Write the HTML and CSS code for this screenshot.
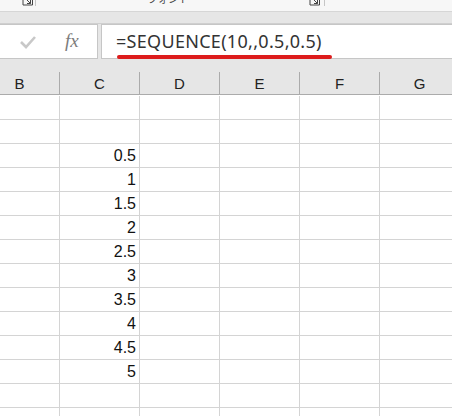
FILE: index.html
```html
<!DOCTYPE html>
<html lang="ja">
<head>
    <meta charset="UTF-8">
    <title>SEQUENCE</title>
    <link rel="stylesheet" href="styles.css">
</head>
<body>
    <!-- Ribbon tail -->
    <div class="ribbon">
        <div class="group group-left">
            <svg class="launcher" width="11" height="16" viewBox="0 0 11 16">
                <path d="M1 5.5 V15 H10.5 V5.5" fill="none" stroke="#444" stroke-width="1"/>
                <path d="M3 8 L8.5 13.5 M8.5 10 V13.5 H5" fill="none" stroke="#444" stroke-width="1"/>
            </svg>
        </div>
        <div class="group group-mid">
            <span class="group-label">フォント</span>
            <svg class="launcher" width="11" height="16" viewBox="0 0 11 16">
                <path d="M1 5.5 V15 H10.5 V5.5" fill="none" stroke="#444" stroke-width="1"/>
                <path d="M3 8 L8.5 13.5 M8.5 10 V13.5 H5" fill="none" stroke="#444" stroke-width="1"/>
            </svg>
        </div>
    </div>
    <div class="band"></div>

    <!-- Formula bar -->
    <div class="formula-bar">
        <div class="fx-box">
            <svg class="check" width="18" height="14" viewBox="0 0 18 14">
                <path d="M2 7 L7 12 L16 2" fill="none" stroke="#c8c8c8" stroke-width="2.6"/>
            </svg>
            <span class="fx">fx</span>
        </div>
        <div class="formula-input">
            <span class="formula">=SEQUENCE(10,,0.5,0.5)</span>
        </div>
    </div>
    <div class="gap"></div>

    <!-- Sheet -->
    <div class="sheet" id="sheet">
        <div class="col-head">B</div>
        <div class="col-head">C</div>
        <div class="col-head">D</div>
        <div class="col-head">E</div>
        <div class="col-head">F</div>
        <div class="col-head">G</div>
    </div>

    <script>
        const sheet = document.getElementById('sheet');
        const values = ['', '', 0.5, 1, 1.5, 2, 2.5, 3, 3.5, 4, 4.5, 5, '', ''];
        let html = '';
        values.forEach(v => {
            for (let c = 0; c < 6; c++) {
                html += `<div class="cell">${c === 1 ? v : ''}</div>`;
            }
        });
        sheet.innerHTML += html;
    </script>
</body>
</html>
```

FILE: styles.css
```css
* {
    box-sizing: border-box;
    margin: 0;
    padding: 0;
}

body {
    width: 452px;
    height: 416px;
    overflow: hidden;
    background-color: #fff;
    font-family: 'Liberation Sans', Arial, sans-serif;
    color: #222;
}

/* Ribbon */
.ribbon {
    height: 12px;
    background-color: #f7f7f7;
    border-bottom: 1px solid #d6d6d6;
    display: flex;
    align-items: flex-start;
    overflow: hidden;
}

.group {
    display: flex;
    align-items: flex-start;
    height: 6px;
    border-right: 1px solid #c6c6c6;
}

.group-left {
    width: 36px;
    padding-left: 22px;
}

.group-mid {
    width: 289px;
    padding-left: 111px;
}

.launcher {
    display: block;
    flex-shrink: 0;
    margin-top: -10px;
}

.group-label {
    font-family: 'Noto Sans CJK JP', sans-serif;
    font-size: 11px;
    line-height: 14px;
    color: #444;
    margin-top: -9px;
    margin-right: 120px;
    letter-spacing: -0.5px;
}

.band {
    height: 12px;
    background-color: #e6e6e6;
    border-bottom: 1px solid #cfcfcf;
}

/* Formula bar */
.formula-bar {
    height: 35px;
    background-color: #e6e6e6;
    display: flex;
    gap: 3px;
}

.fx-box {
    width: 98px;
    background-color: #fff;
    border: 1px solid #c6c6c6;
    border-left: none;
    display: flex;
    align-items: center;
    padding-left: 19px;
}

.check {
    display: block;
}

.fx {
    font-family: 'Liberation Serif', serif;
    font-style: italic;
    font-size: 19px;
    color: #7c7c7c;
    margin-left: 28px;
    margin-top: -2px;
}

.formula-input {
    flex: 1;
    background-color: #fff;
    border: 1px solid #c6c6c6;
    border-right: none;
    display: flex;
    align-items: center;
    padding-left: 14px;
}

.formula {
    font-family: 'Noto Sans', sans-serif;
    font-size: 18px;
    letter-spacing: 0.3px;
    color: #333;
    position: relative;
    padding-bottom: 1px;
}

.formula::after {
    content: '';
    position: absolute;
    left: 1px;
    right: -10px;
    bottom: -5px;
    height: 4px;
    border-radius: 2px;
    background-color: #dd1c1c;
}

.gap {
    height: 13px;
    background-color: #e6e6e6;
}

/* Sheet grid */
.sheet {
    display: grid;
    grid-template-columns: repeat(6, 80px);
    grid-auto-rows: 24px;
    margin-left: -20px;
    width: 480px;
}

.col-head {
    height: 23px;
    background-color: #e6e6e6;
    border-right: 1px solid #ababab;
    border-bottom: 1px solid #ababab;
    text-align: center;
    font-size: 15px;
    line-height: 23px;
    color: #222;
}

.cell {
    border-right: 1px solid #d4d4d4;
    border-bottom: 1px solid #d4d4d4;
    text-align: right;
    padding-right: 3px;
    font-size: 16px;
    line-height: 24px;
    color: #111;
}
```
